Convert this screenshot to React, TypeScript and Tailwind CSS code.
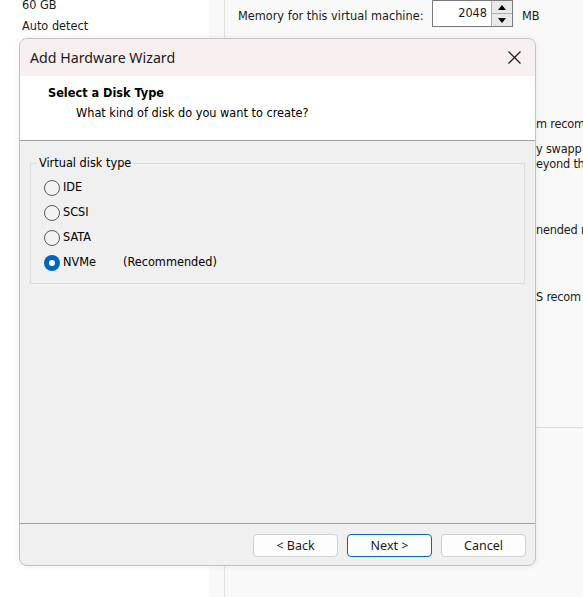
import React from "react";

const dlg = { fontFamily: '"DejaVu Sans Condensed", "DejaVu Sans", sans-serif' };
const ui = { fontFamily: '"Noto Sans", "Open Sans", sans-serif' };

// background text line whose left part is hidden behind the wizard
function PeekLine({ shown, className }: { shown: string; className?: string }) {
  return (
    <div className={`flex whitespace-nowrap h-[15px] items-center ${className ?? ""}`}>
      <span className="w-[311px] shrink-0" />
      <span>{shown}</span>
    </div>
  );
}

function Radio({ label, checked, extra }: { label: string; checked?: boolean; extra?: string }) {
  return (
    <div className="flex items-center h-[25px]">
      {checked ? (
        <span className="w-[16px] h-[16px] rounded-full bg-[#0067c0] flex items-center justify-center">
          <span className="w-[6px] h-[6px] rounded-full bg-white" />
        </span>
      ) : (
        <span className="w-[16px] h-[16px] rounded-full border border-[#5a5a5a] bg-[#f3f3f3]" />
      )}
      <span className="ml-[3px] w-[60px] text-[#000]">{label}</span>
      {extra && <span className="text-[#000]">{extra}</span>}
    </div>
  );
}

function Btn({ children, primary }: { children: React.ReactNode; primary?: boolean }) {
  return (
    <button
      className={`w-[85px] h-[23px] rounded-[4px] bg-[#fdfdfd] text-[12.5px] text-[#1b1b1b] flex items-center justify-center pt-[2px] border ${
        primary ? "border-[#0067c0]" : "border-[#d0d0d0]"
      }`}
      style={ui}
    >
      {children}
    </button>
  );
}

export default function App() {
  return (
    <div className="relative w-[583px] h-[597px] overflow-hidden flex text-[12.6px] text-[#1a1a1a]" style={dlg}>
      {/* left pane */}
      <div className="w-[209px] bg-white pl-[22px] shrink-0">
        <div className="h-[12px] leading-[10px]">60 GB</div>
        <div className="mt-[7px] h-[14px] leading-[14px]">Auto detect</div>
      </div>
      <div className="w-px bg-[#8a8a8a]" />

      {/* right pane */}
      <div className="flex-1 bg-[#f9f9f9] flex">
        <div className="w-[15px] shrink-0" />
        <div className="w-px bg-[#e0e0e0]" />
        <div className="flex-1 flex flex-col">
          <div className="flex items-center h-[28px] pl-[13px]">
            <span className="w-[194px] pt-[4px]">Memory for this virtual machine:</span>
            <div className="flex h-[27px] -mt-[1px] border border-[#7a7a7a] bg-white">
              <div className="w-[58px] text-right pr-[4px] pt-[3px]">2048</div>
              <div className="w-[21px] flex flex-col border-l border-[#adadad]">
                <div className="flex-1 bg-[#e9e9e9] border-b border-[#adadad] flex items-center justify-center">
                  <svg width="8" height="5" viewBox="0 0 8 5"><path d="M0 5 L4 0 L8 5 Z" fill="#000" /></svg>
                </div>
                <div className="flex-1 bg-[#e9e9e9] flex items-center justify-center">
                  <svg width="8" height="5" viewBox="0 0 8 5"><path d="M0 0 L4 5 L8 0 Z" fill="#000" /></svg>
                </div>
              </div>
            </div>
            <span className="ml-[9px] pt-[4px]">MB</span>
          </div>

          <div className="mt-[89px] tracking-[-0.2px]">
            <PeekLine shown="m recom" />
            <PeekLine shown="y swapp" className="mt-[10px]" />
            <PeekLine shown="eyond th" />
            <PeekLine shown="nended r" className="mt-[51px]" />
            <PeekLine shown="S recom" className="mt-[52px]" />
          </div>
          <div className="mt-[122px] h-px bg-[#dcdcdc]" />
        </div>
      </div>

      {/* Add Hardware Wizard dialog */}
      <div className="absolute left-[19px] top-[38px] w-[517px] h-[528px] rounded-[8px] border border-[#c2c2c2] bg-[#f0f0f0] overflow-hidden flex flex-col shadow-[0_0_6px_rgba(0,0,0,0.08)]">
        <div className="h-[37px] bg-[#f8eff0] flex items-center pl-[10px] pr-[14px] justify-between shrink-0">
          <span className="text-[14.2px] text-[#1a1a1a]" style={ui}>Add Hardware Wizard</span>
          <svg width="13" height="13" viewBox="0 0 13 13">
            <path d="M0.5 0.5 L12.5 12.5 M12.5 0.5 L0.5 12.5" stroke="#1a1a1a" strokeWidth="1.2" />
          </svg>
        </div>
        <div className="h-[65px] bg-white border-b border-[#a0a0a0] shrink-0 pl-[28px] pt-[9px]">
          <div className="font-bold text-[#000] h-[16px] leading-[16px]">Select a Disk Type</div>
          <div className="ml-[28px] mt-[4px] h-[16px] leading-[16px] text-[#000]">What kind of disk do you want to create?</div>
        </div>
        <div className="flex-1 px-[10px] pt-[22px]">
          <div className="relative h-[121px] border border-[#dcdcdc] pl-[13px] pt-[11px]">
            <span className="absolute -top-[8px] left-[6px] bg-[#f0f0f0] px-[2px] leading-[14px] text-[#000]">
              Virtual disk type
            </span>
            <Radio label="IDE" />
            <Radio label="SCSI" />
            <Radio label="SATA" />
            <Radio label="NVMe" extra="(Recommended)" checked />
          </div>
        </div>
        <div className="h-[42px] border-t border-[#a0a0a0] flex items-center justify-end gap-[9px] pr-[9px] shrink-0 pt-[1px]">
          <Btn>&lt; Back</Btn>
          <Btn primary>Next &gt;</Btn>
          <Btn>Cancel</Btn>
        </div>
      </div>
    </div>
  );
}
